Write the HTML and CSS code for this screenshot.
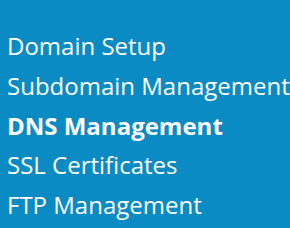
FILE: index.html
```html
<!DOCTYPE html>
<html>
<head>
<meta charset="utf-8">
<link rel="stylesheet" href="styles.css">
</head>
<body>
<nav class="menu">
  <ul class="menu-list">
    <li class="menu-item">Domain Setup</li>
    <li class="menu-item">Subdomain Management</li>
    <li class="menu-item active">DNS Management</li>
    <li class="menu-item">SSL Certificates</li>
    <li class="menu-item">FTP Management</li>
  </ul>
</nav>
</body>
</html>
```
FILE: styles.css
```css
html, body {
  margin: 0;
  padding: 0;
  width: 290px;
  height: 228px;
  overflow: hidden;
  background: #0a8bc4;
}
.menu {
  padding: 26px 0 0 7px;
  font-family: "Open Sans", sans-serif;
  color: #ffffff;
}
.menu-list {
  list-style: none;
  margin: 0;
  padding: 0;
}
.menu-item {
  font-size: 24px;
  line-height: 39.75px;
  white-space: nowrap;
}
.menu-item.active {
  font-weight: 700;
}
```
